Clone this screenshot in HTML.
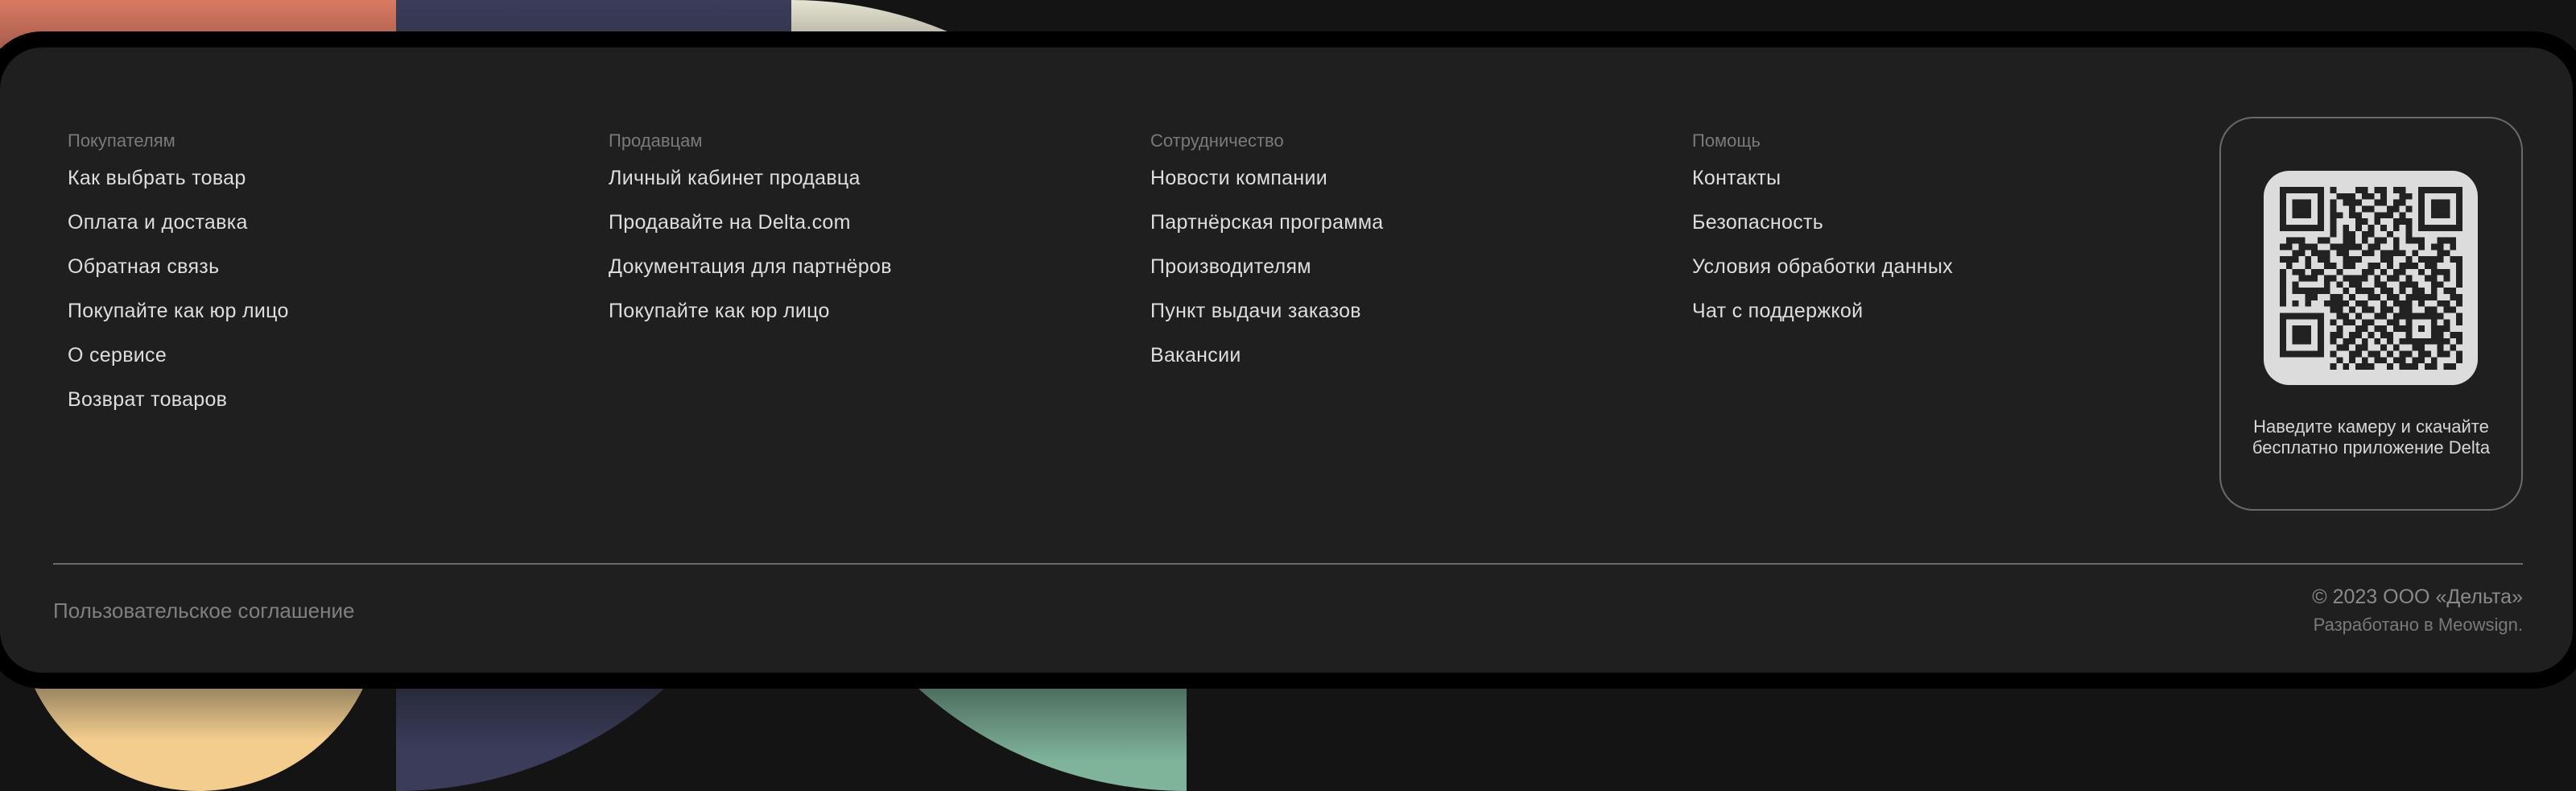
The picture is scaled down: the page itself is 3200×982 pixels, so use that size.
<!DOCTYPE html>
<html><head><meta charset="utf-8">
<style>
*{margin:0;padding:0;box-sizing:border-box}
html,body{width:3200px;height:982px;overflow:hidden;background:#141414;font-family:"Liberation Sans","Noto Sans CJK SC",sans-serif}
.abs{position:absolute}
.col{position:absolute;top:163px}
.col h4{font-weight:normal;font-size:22px;color:#7a7a7a;height:24px;line-height:24px;margin-bottom:20px}
.col a{display:block;color:#dedede;font-size:25px;line-height:28px;height:55px;text-decoration:none;letter-spacing:0.3px}
</style></head><body>
<svg class="abs" style="left:0;top:0" width="3200" height="982">
<defs>
<linearGradient id="go" x1="0" y1="0" x2="0" y2="1"><stop offset="0" stop-color="#d97a62"/><stop offset="1" stop-color="#a85d4d"/></linearGradient>
<linearGradient id="gn" x1="0" y1="0" x2="0" y2="1"><stop offset="0" stop-color="#3b3c5a"/><stop offset="1" stop-color="#33344c"/></linearGradient>
<linearGradient id="gc" x1="0" y1="0" x2="0" y2="60" gradientUnits="userSpaceOnUse"><stop offset="0" stop-color="#e6e4d2"/><stop offset="1" stop-color="#a9a898"/></linearGradient>
<linearGradient id="gy" x1="0" y1="855" x2="0" y2="982" gradientUnits="userSpaceOnUse"><stop offset="0" stop-color="#9b8661"/><stop offset="0.5" stop-color="#f2cd8e"/><stop offset="1" stop-color="#f2cd8e"/></linearGradient>
<linearGradient id="gb" x1="0" y1="855" x2="0" y2="982" gradientUnits="userSpaceOnUse"><stop offset="0" stop-color="#282a3b"/><stop offset="0.6" stop-color="#3b3c5a"/></linearGradient>
<linearGradient id="gg" x1="0" y1="855" x2="0" y2="982" gradientUnits="userSpaceOnUse"><stop offset="0" stop-color="#4e6e60"/><stop offset="0.7" stop-color="#7fb39a"/></linearGradient>
<clipPath id="ct"><rect x="983" y="0" width="1000" height="60"/></clipPath>
</defs>
<rect x="0" y="0" width="492" height="60" fill="url(#go)"/>
<rect x="492" y="0" width="491" height="60" fill="url(#gn)"/>
<circle cx="983" cy="500" r="500" fill="url(#gc)" clip-path="url(#ct)"/>
<circle cx="247" cy="755" r="227" fill="url(#gy)"/>
<path d="M492 482 L992 482 A500 500 0 0 1 492 982 Z" fill="url(#gb)"/>
<path d="M1474 482 L1474 982 A500 500 0 0 1 974 482 Z" fill="url(#gg)"/>
</svg>
<div class="abs" style="left:-20px;top:39px;width:3238px;height:816px;background:#000;border-radius:72px"></div>
<div class="abs" style="left:0;top:59px;width:3196px;height:776px;background:#1f1f1f;border-radius:52px"></div>

<div class="col" style="left:84px"><h4>Покупателям</h4>
<a>Как выбрать товар</a><a>Оплата и доставка</a><a>Обратная связь</a><a>Покупайте как юр лицо</a><a>О сервисе</a><a>Возврат товаров</a></div>
<div class="col" style="left:756px"><h4>Продавцам</h4>
<a>Личный кабинет продавца</a><a>Продавайте на Delta.com</a><a>Документация для партнёров</a><a>Покупайте как юр лицо</a></div>
<div class="col" style="left:1429px"><h4>Сотрудничество</h4>
<a>Новости компании</a><a>Партнёрская программа</a><a>Производителям</a><a>Пункт выдачи заказов</a><a>Вакансии</a></div>
<div class="col" style="left:2102px"><h4>Помощь</h4>
<a>Контакты</a><a>Безопасность</a><a>Условия обработки данных</a><a>Чат с поддержкой</a></div>

<div class="abs" style="left:2757px;top:145px;width:377px;height:489px;border:2px solid #6a6a6a;border-radius:42px"></div>
<div class="abs" style="left:2812px;top:212px;width:266px;height:266px;background:#dcdcdc;border-radius:32px"></div>
<svg id="qr" class="abs" style="left:2832px;top:232px" width="227" height="227" viewBox="0 0 29 29" shape-rendering="crispEdges"></svg>
<div class="abs" style="left:2737px;top:517px;width:417px;text-align:center;color:#d6d6d6;font-size:22px;line-height:26px">Наведите камеру и скачайте<br>бесплатно приложение Delta</div>

<div class="abs" style="left:66px;top:699px;width:3068px;height:2px;background:#6a6a6a"></div>
<div class="abs" style="left:66px;top:743px;color:#808080;font-size:26px">Пользовательское соглашение</div>
<div class="abs" style="right:66px;top:727px;color:#8a8a8a;font-size:25px;text-align:right">© 2023 ООО «Дельта»</div>
<div class="abs" style="right:66px;top:763px;color:#7a7a7a;font-size:22px;text-align:right">Разработано в Meowsign.</div>

<script>
var rows=[
"11111110100011011011001111111",
"10000010011101101001101000001",
"10111010101110011011001011101",
"10111010100101100110101011101",
"10111010110110011101001011101",
"10000010100011010011101000001",
"11111110101010101010101111111",
"00000000101101100100100000000",
"01110011001101011010111001110",
"11011100111110110010001011010",
"00110111011001101111010001100",
"11101011001110001100101111011",
"01001001101100110101110110001",
"10110110010001101011001011101",
"10011101101111010110100110101",
"10100001010110011001110011001",
"10111111001011101101011010110",
"10001100110100110110111110011",
"10101001111011001011101001101",
"00000000110101101101100110110",
"11111110011010011011111111001",
"10000010101101100110100010101",
"10111010010011011011101011100",
"10111010110110101100100011011",
"10111010101101010101111111101",
"10000010011011001010011001010",
"11111110100110110101101101101",
"00000000010101011011011010001",
"00000000101011100101110110110"];
var s="";for(var y=0;y<29;y++)for(var x=0;x<29;x++)if(rows[y][x]=="1")s+='<rect x="'+x+'" y="'+y+'" width="1" height="1"/>';
var q=document.getElementById("qr");q.innerHTML='<g fill="#222">'+s+'</g>';
</script>
</body></html>
